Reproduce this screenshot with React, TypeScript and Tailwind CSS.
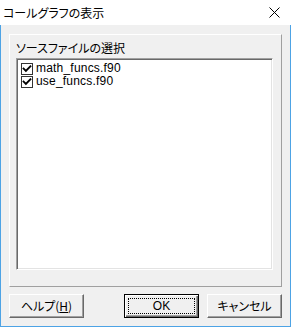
import React from "react";

const jp = "font-['Noto_Sans_CJK_JP',sans-serif]";

function Check() {
  return (
    <svg width="12" height="12" viewBox="0 0 12 12" className="shrink-0">
      <rect x="0.5" y="0.5" width="11" height="11" fill="#fff" stroke="#333" />
      <path d="M2.6 5.6 L4.9 7.9 L9.4 3.3" fill="none" stroke="#000" strokeWidth="1.9" strokeLinecap="square" />
    </svg>
  );
}

function Btn({ children, def }: { children: React.ReactNode; def?: boolean }) {
  if (def) {
    return (
      <div className="relative w-[75px] h-[24px] border border-[#000] bg-[#f0f0f0] shadow-[inset_1px_1px_0_#fff,inset_-1px_-1px_0_#696969,inset_-2px_-2px_0_#a0a0a0] flex items-center justify-center">
        <div className="absolute left-[3px] top-[3px] right-[3px] bottom-[3px] border border-dotted border-[#000]" />
        {children}
      </div>
    );
  }
  return (
    <div className="w-[75px] h-[24px] border-t border-l border-t-white border-l-white border-b border-r border-b-[#696969] border-r-[#696969] bg-[#f0f0f0] shadow-[inset_-1px_-1px_0_#a0a0a0] flex items-center justify-center">
      {children}
    </div>
  );
}

export default function App() {
  return (
    <div className="w-[291px] h-[327px] flex flex-col text-[#000] font-['Liberation_Sans',sans-serif] text-[12px] overflow-hidden">
      <div className="h-[25px] bg-white flex items-center shrink-0">
        <span className={`${jp} pl-[3px] text-[12px] leading-[16px] [font-feature-settings:'palt']`}>コールグラフの表示</span>
        <svg width="11" height="11" viewBox="0 0 11 11" className="ml-auto mr-[11px]">
          <path d="M0.5 0.5 L10.5 10.5 M10.5 0.5 L0.5 10.5" stroke="#000" strokeWidth="1" />
        </svg>
      </div>
      <div className="flex-1 bg-[#f0f0f0] border-x border-b border-[#4da3e5] pt-[9px] px-[8px] pb-[8px] flex flex-col">
        <div className="h-[253px] border-t border-l border-t-white border-l-white border-b border-r border-b-[#a0a0a0] border-r-[#a0a0a0] pl-[6px] pr-[8px] pt-[5px] flex flex-col">
          <div className={`${jp} leading-[16px] mb-[2px] text-[12px] [font-feature-settings:'palt']`}>ソースファイルの選択</div>
          <div className="h-[212px] bg-white border-t border-l border-t-[#a0a0a0] border-l-[#a0a0a0] border-b border-r border-b-white border-r-white shadow-[inset_1px_1px_0_#696969,inset_-1px_-1px_0_#e3e3e3] pt-[3px] pl-[4px] flex flex-col">
            <div className="h-[13px] flex items-center gap-[3px]">
              <Check />
              <span className="leading-[13px] tracking-[0.2px]">math_funcs.f90</span>
            </div>
            <div className="h-[13px] flex items-center gap-[3px]">
              <Check />
              <span className="leading-[13px] tracking-[0.2px]">use_funcs.f90</span>
            </div>
          </div>
        </div>
        <div className="mt-[7px] flex items-center">
          <Btn>
            <span className={`${jp} text-[12px] leading-[14px] [font-feature-settings:'palt']`}>
              ヘルプ(<span className="underline">H</span>)
            </span>
          </Btn>
          <div className="ml-auto flex gap-[8px]">
            <Btn def>
              <span className="text-[12px] leading-[14px]">OK</span>
            </Btn>
            <Btn>
              <span className={`${jp} text-[12px] leading-[14px] [font-feature-settings:'palt']`}>キャンセル</span>
            </Btn>
          </div>
        </div>
      </div>
    </div>
  );
}
